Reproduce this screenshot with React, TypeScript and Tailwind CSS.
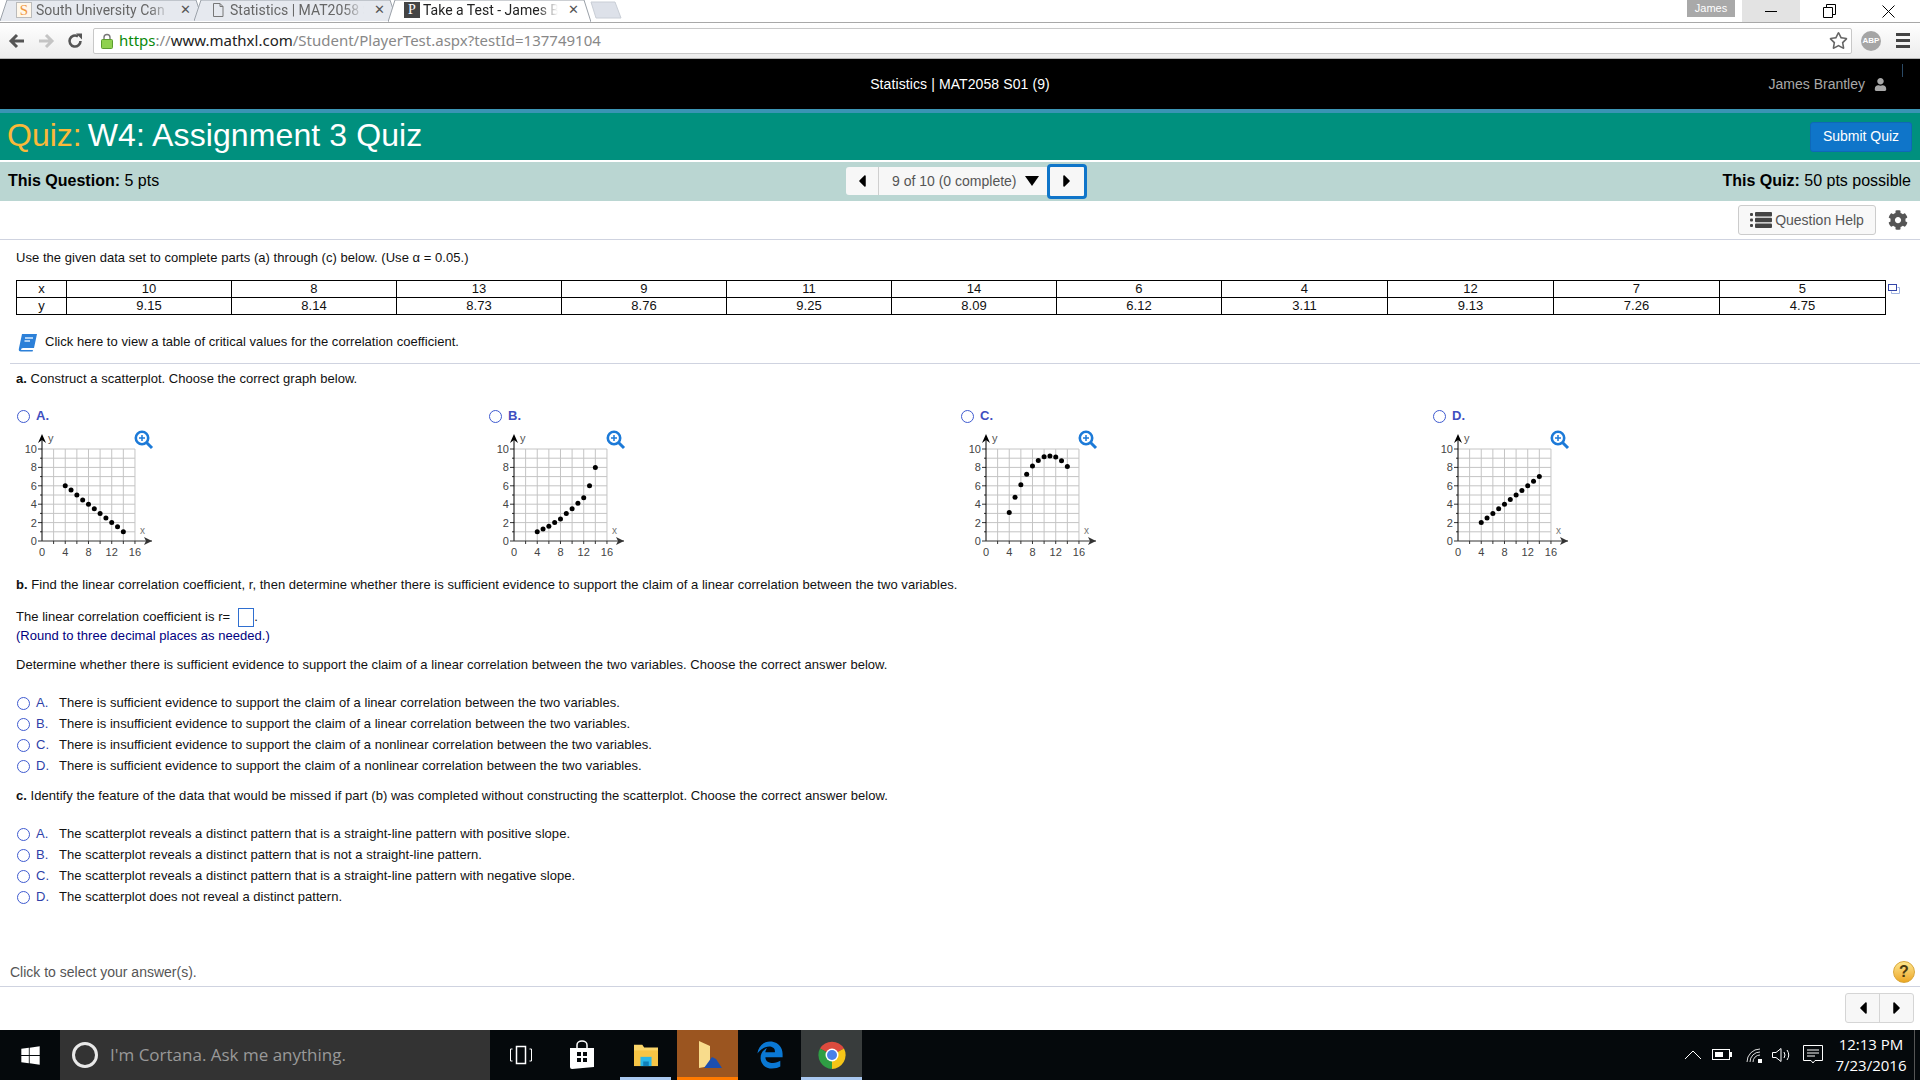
import { FaCaretLeft, FaCaretRight, FaCog, FaRegStar, FaUser, FaWindows } from "react-icons/fa";
import { FaEdgeLegacy } from "react-icons/fa6";

const xs = ["x", "10", "8", "13", "9", "11", "14", "6", "4", "12", "7", "5"];
const ys = ["y", "9.15", "8.14", "8.73", "8.76", "9.25", "8.09", "6.12", "3.11", "9.13", "7.26", "4.75"];
const colWidths = [
  "w-[50px]", "w-[165px]", "w-[165px]", "w-[165px]", "w-[165px]", "w-[165px]",
  "w-[165px]", "w-[165px]", "w-[166px]", "w-[166px]", "w-[166px]", "w-[166px]",
];

const graphs = [
  { label: "A.", pts: [6, 5.55, 5, 4.45, 4, 3.5, 3, 2.5, 2, 1.55, 1] },
  { label: "B.", pts: [1, 1.3, 1.6, 2, 2.4, 3, 3.5, 4.1, 4.7, 6, 8] },
  { label: "C.", pts: [3.11, 4.75, 6.12, 7.26, 8.14, 8.76, 9.15, 9.25, 9.13, 8.73, 8.09] },
  { label: "D.", pts: [2, 2.5, 3, 3.5, 4, 4.5, 5, 5.5, 6, 6.5, 7] },
];

const partB = [
  ["A.", "There is sufficient evidence to support the claim of a linear correlation between the two variables."],
  ["B.", "There is insufficient evidence to support the claim of a linear correlation between the two variables."],
  ["C.", "There is insufficient evidence to support the claim of a nonlinear correlation between the two variables."],
  ["D.", "There is sufficient evidence to support the claim of a nonlinear correlation between the two variables."],
];

const partC = [
  ["A.", "The scatterplot reveals a distinct pattern that is a straight-line pattern with positive slope."],
  ["B.", "The scatterplot reveals a distinct pattern that is not a straight-line pattern."],
  ["C.", "The scatterplot reveals a distinct pattern that is a straight-line pattern with negative slope."],
  ["D.", "The scatterplot does not reveal a distinct pattern."],
];

function Radio() {
  return <span className="block h-[13px] w-[13px] shrink-0 rounded-full border border-[#3f5bd0] bg-white" />;
}

function Option({ letter, text }: { letter: string; text: string }) {
  return (
    <div className="flex h-4 items-center pl-[1px]">
      <Radio />
      <span className="ml-[6px] w-[23px] text-[#2f3fa8]">{letter}</span>
      <span>{text}</span>
    </div>
  );
}

function Scatter({ pts }: { pts: number[] }) {
  const px = (u: number) => 25 + u * 5.81;
  const py = (v: number) => 113 - v * 9.2;
  const vert = [1, 2, 3, 4, 5, 6, 7, 8];
  const horiz = [1, 2, 3, 4, 5, 6, 7, 8, 9, 10];
  return (
    <svg width="150" height="130" className="block">
      {vert.map((i) => (
        <line key={i} x1={px(i * 2)} x2={px(i * 2)} y1={py(10)} y2={py(0)} stroke="#c4c4c4" />
      ))}
      {horiz.map((i) => (
        <line key={i} x1={px(0)} x2={px(16)} y1={py(i)} y2={py(i)} stroke="#c4c4c4" />
      ))}
      {horiz.map((i) => (
        <line key={i} x1={px(0) - (i % 2 ? 2 : 4)} x2={px(0)} y1={py(i)} y2={py(i)} stroke="#333" />
      ))}
      {vert.map((i) => (
        <line key={i} x1={px(i * 2)} x2={px(i * 2)} y1={py(0)} y2={py(0) + 3} stroke="#333" />
      ))}
      <line x1={px(0)} x2={px(0)} y1={py(0)} y2="8" stroke="#000" />
      <line x1={px(0) - 4} x2="135" y1={py(0)} y2={py(0)} stroke="#333" />
      <path d="M25 6 L29 15 L25 12 L21 15 Z" fill="#000" />
      <path d="M135 113 L127 109 L129 113 L127 117 Z" fill="#333" />
      {[0, 2, 4, 6, 8, 10].map((v) => (
        <text key={v} x="20" y={py(v) + 4} textAnchor="end" fontSize="11" fill="#444" fontFamily="Liberation Sans, sans-serif">
          {v}
        </text>
      ))}
      {[0, 4, 8, 12, 16].map((v) => (
        <text key={v} x={px(v)} y="128" textAnchor="middle" fontSize="11" fill="#444" fontFamily="Liberation Sans, sans-serif">
          {v}
        </text>
      ))}
      <text x="31" y="14" fontSize="11" fill="#555" fontFamily="Liberation Sans, sans-serif">y</text>
      <text x="123" y="106" fontSize="10" fill="#777" fontFamily="Liberation Sans, sans-serif">x</text>
      {pts.map((v, i) => (
        <circle key={i} cx={px(i + 4)} cy={py(v)} r="2.5" fill="#000" />
      ))}
      <circle cx="125" cy="10" r="6.2" fill="#fff" stroke="#1c7ad8" strokeWidth="2.6" />
      <line x1="129.5" y1="14.5" x2="135" y2="20" stroke="#1c7ad8" strokeWidth="3" />
      <path d="M122 10 H128 M125 7 V13" stroke="#1c7ad8" strokeWidth="1.5" />
    </svg>
  );
}

function Tab({ active, title, icon }: { active?: boolean; title: string; icon: React.ReactNode }) {
  return (
    <div className={active ? "relative z-10 -ml-[9px] h-[23px] w-[203px]" : "relative -ml-[9px] h-[22px] w-[203px] first:ml-0"}>
      <svg className="absolute inset-0 h-full w-full" viewBox="0 0 203 23" preserveAspectRatio="none">
        <path d="M0 22 L7 0 H196 L203 22" fill={active ? "#ffffff" : "#e6e9ef"} stroke="#9aa0a8" />
      </svg>
      <div className="relative flex h-[20px] items-center pl-[16px] pr-[12px] text-[14px] font-['Roboto',sans-serif]">
        {icon}
        <span
          className={
            active
              ? "ml-[3px] w-[135px] whitespace-nowrap text-[#222] [mask-image:linear-gradient(to_right,black_85%,transparent)]"
              : "ml-[4px] w-[134px] whitespace-nowrap text-[#666] [mask-image:linear-gradient(to_right,black_85%,transparent)]"
          }
        >
          {title}
        </span>
        <span className="ml-auto text-[13px] text-[#555]">✕</span>
      </div>
    </div>
  );
}

export default function App() {
  return (
    <div className="flex h-[1080px] w-[1920px] flex-col overflow-hidden bg-white font-['Liberation_Sans',Arial,sans-serif] text-black">
      {/* browser tabs */}
      <div className="flex h-[22px] items-start">
        <Tab
          title="South University Can"
          icon={<span className="flex h-[16px] w-[16px] items-center justify-center border border-[#bbb] bg-[#fff7ea] font-['Liberation_Serif',serif] text-[15px] leading-none text-[#f0963c]">S</span>}
        />
        <Tab
          title="Statistics | MAT2058 S"
          icon={
            <svg width="16" height="16" viewBox="0 0 16 16" fill="none" stroke="#777">
              <path d="M3.5 1.5 H10 L13 4.5 V14.5 H3.5 Z M10 1.5 V4.5 H13" />
            </svg>
          }
        />
        <Tab
          active
          title="Take a Test - James B"
          icon={<span className="flex h-[16px] w-[16px] items-center justify-center bg-[#444] font-['Liberation_Serif',serif] text-[14px] leading-none text-white">P</span>}
        />
        <svg width="38" height="20" className="-ml-[3px]">
          <path d="M3 2 H27 L33 18 H8 Z" fill="#dde1e9" stroke="#c9ced6" />
        </svg>
        <div className="ml-auto flex h-[22px] items-start pr-[2px]">
          <div className="mr-[7px] flex h-[17px] w-[48px] items-center justify-center bg-[#a9a9a9] text-[11px] text-white">James</div>
          <div className="flex h-[22px] w-[58px] items-center justify-center bg-[#e3e3e3]">
            <div className="h-px w-[12px] bg-black" />
          </div>
          <div className="flex h-[22px] w-[58px] items-center justify-center">
            <svg width="13" height="14" fill="none" stroke="#000">
              <path d="M.5 3.5 H9.5 V13.5 H.5 Z M3.5 3.5 V.5 H12.5 V10.5 H9.5" />
            </svg>
          </div>
          <div className="flex h-[22px] w-[60px] items-center justify-center">
            <svg width="13" height="13" stroke="#000">
              <path d="M.5 .5 L12.5 12.5 M12.5 .5 L.5 12.5" />
            </svg>
          </div>
        </div>
      </div>

      {/* browser toolbar */}
      <div className="flex h-[37px] items-center border-t border-b border-t-[#a8a8a8] border-b-[#b5b5b5] bg-linear-to-b from-white to-[#ececec]">
        <svg width="18" height="16" viewBox="0 0 18 16" className="ml-[8px]" fill="none" stroke="#555" strokeWidth="3">
          <path d="M16 8 H3 M9 2 L3 8 L9 14" />
        </svg>
        <svg width="18" height="16" viewBox="0 0 18 16" className="ml-[11px]" fill="none" stroke="#c4c4c4" strokeWidth="3">
          <path d="M2 8 H15 M9 2 L15 8 L9 14" />
        </svg>
        <svg width="16" height="16" viewBox="0 0 16 16" className="ml-[12px]" fill="none" stroke="#555" strokeWidth="2.6">
          <path d="M13.5 8 A5.5 5.5 0 1 1 11 3.4" />
          <path d="M9 .5 H15 V6.5 Z" fill="#555" stroke="none" />
        </svg>
        <div className="ml-[10px] flex h-[26px] w-[1759px] items-center rounded-[2px] border border-[#c8c8c8] bg-white pl-[7px] font-['Noto_Sans',sans-serif] text-[15px]">
          <svg width="12" height="16" viewBox="0 0 12 16">
            <path d="M3 7 V4.5 A3 3 0 0 1 9 4.5 V7" fill="none" stroke="#777" strokeWidth="1.4" />
            <rect x="0.5" y="6.5" width="11" height="9" rx="1" fill="#8fd14f" stroke="#5c9c2f" />
          </svg>
          <span className="ml-[6px] whitespace-nowrap">
            <span className="text-[#0a8a0a]">https</span>
            <span className="text-[#888]">://</span>
            <span className="text-[#222]">www.mathxl.com</span>
            <span className="text-[#888]">/Student/PlayerTest.aspx?testId=137749104</span>
          </span>
          <FaRegStar className="ml-auto mr-[3px] text-[19px] text-[#666]" />
        </div>
        <div className="ml-[9px] flex h-[20px] w-[20px] items-center justify-center rounded-full bg-[#a5a5a5] text-[8px] font-bold text-white">ABP</div>
        <div className="ml-[15px] flex w-[14px] flex-col gap-[3px]">
          <div className="h-[3px] bg-[#444]" />
          <div className="h-[3px] bg-[#444]" />
          <div className="h-[3px] bg-[#444]" />
        </div>
      </div>

      {/* course bar */}
      <div className="relative flex h-[50px] items-center justify-center bg-black text-[14px] font-medium tracking-[0.1px] text-white">
        Statistics | MAT2058 S01 (9)
        <div className="absolute right-[33px] top-[15px] flex items-center gap-[9px] tracking-normal text-[#a8a8a8]">
          James Brantley
          <FaUser className="text-[13px]" />
        </div>
        <div className="absolute right-[17px] top-[5px] h-[13px] w-px bg-[#2b4a66]" />
      </div>
      <div className="h-[4px] bg-[#3a94b4]" />

      <div className="flex h-[47px] items-center justify-between bg-[#00907e] pl-[7px] pr-[8px]">
        <div className="-mt-[3px] flex gap-[6px] text-[32px] leading-none text-white">
          <span className="text-[#fbb939]">Quiz:</span>
          <span className="tracking-[0.1px]">W4: Assignment 3 Quiz</span>
        </div>
        <button className="flex h-[30px] w-[102px] items-center justify-center rounded-[3px] border border-[#0f68b8] bg-[#0f75c9] text-[14px] text-white">
          Submit Quiz
        </button>
      </div>
      <div className="h-[2px] bg-white" />

      <div className="relative flex h-[39px] items-center justify-between bg-[#bad6d2] pb-[2px] pl-[8px] pr-[9px] text-[16px]">
        <div>
          <b>This Question:</b> 5 pts
        </div>
        <div className="absolute left-[846px] top-[2px] flex h-[34px] items-center">
          <div className="flex h-[28px] items-center rounded-l-[3px] bg-[#f7f7f7] text-[14px] text-[#555]">
            <div className="flex h-[28px] w-[33px] items-center justify-center border-r border-[#cfcfcf]">
              <FaCaretLeft className="text-[20px] text-black" />
            </div>
            <span className="ml-[13px] whitespace-nowrap">9 of 10 (0 complete)</span>
            <svg width="14" height="10" className="ml-[8px] mr-[8px]">
              <path d="M0 0 H14 L7 10 Z" fill="#000" />
            </svg>
          </div>
          <div className="flex h-[35px] w-[40px] items-center justify-center rounded-[4px] border-[3px] border-[#0f75c9] bg-[#f7f7f7]">
            <FaCaretRight className="text-[20px] text-black" />
          </div>
        </div>
        <div>
          <b>This Quiz:</b> 50 pts possible
        </div>
      </div>

      <div className="flex h-[39px] items-center justify-end border-b border-[#cfd3e0] pr-[12px]">
        <button className="flex h-[30px] w-[138px] items-center justify-center gap-[3px] rounded-[3px] border border-[#ccc] bg-[#f8f8f8] text-[14px] text-[#555]">
          <svg width="22" height="16" viewBox="0 0 22 16" fill="#444">
            <rect x="0" y="1" width="3" height="3" rx="1" />
            <rect x="0" y="6.5" width="3" height="3" rx="1" />
            <rect x="0" y="12" width="3" height="3" rx="1" />
            <rect x="5" y="0" width="17" height="4.5" rx="1" />
            <rect x="5" y="5.8" width="17" height="4.5" rx="1" />
            <rect x="5" y="11.5" width="17" height="4.5" rx="1" />
          </svg>
          Question Help
        </button>
        <FaCog className="ml-[12px] text-[20px] text-[#555]" />
      </div>

      {/* question */}
      <div className="flex flex-1 flex-col text-[13px] leading-[16px] tracking-[0.04px] text-[#111]">
        <div className="ml-[16px] mt-[10px]">Use the given data set to complete parts (a) through (c) below. (Use α = 0.05.)</div>

        <div className="ml-[16px] mt-[14px] flex items-start">
          <table className="w-[1870px] table-fixed border-collapse border border-black text-center leading-[16px]">
            <tbody>
              {[xs, ys].map((row, r) => (
                <tr key={r} className="h-[17px]">
                  {row.map((v, i) => (
                    <td key={i} className={`${colWidths[i]} border border-black p-0`}>
                      {v}
                    </td>
                  ))}
                </tr>
              ))}
            </tbody>
          </table>
          <svg width="12" height="11" className="ml-[2px] mt-[4px]" fill="none">
            <rect x="0.5" y="0.5" width="8" height="6" stroke="#3345a8" />
            <path d="M9.5 3.5 H11.5 V9.5 H3.5 V7.5" stroke="#9fb2e0" />
          </svg>
        </div>

        <div className="ml-[18px] mt-[18px] flex h-[18px] items-center">
          <svg width="20" height="19" viewBox="0 0 20 19">
            <path d="M4 1 H19 L16 15 H5 Q3 15 3 17 H15 L14.6 18.5 H3 Q0 18.5 1 15 Z" fill="#2c80d8" />
            <path d="M7 5 H15 M6.5 8 H12" stroke="#d8ebff" strokeWidth="1.3" />
          </svg>
          <span className="ml-[7px]">Click here to view a table of critical values for the correlation coefficient.</span>
        </div>

        <div className="ml-[10px] mt-[12px] h-px bg-[#cfd3e0]" />

        <div className="ml-[16px] mt-[7px]">
          <b>a.</b> Construct a scatterplot. Choose the correct graph below.
        </div>

        <div className="ml-[17px] mt-[21px] flex">
          {graphs.map((g) => (
            <div key={g.label} className="w-[472px]">
              <div className="flex h-4 items-center">
                <Radio />
                <span className="ml-[6px] font-bold text-[#3f4fc0]">{g.label}</span>
              </div>
              <div className="mt-[4px]">
                <Scatter pts={g.pts} />
              </div>
            </div>
          ))}
        </div>

        <div className="ml-[16px] mt-[19px]">
          <b>b.</b> Find the linear correlation coefficient, r, then determine whether there is sufficient evidence to support the claim of a linear correlation between the two variables.
        </div>

        <div className="ml-[16px] mt-[16px] flex h-4 items-center">
          The linear correlation coefficient is r=
          <span className="ml-[8px] h-[19px] w-[16px] border border-[#2f6fd0] bg-white" />
          <span>.</span>
        </div>
        <div className="ml-[16px] mt-[3px] text-[#000080]">(Round to three decimal places as needed.)</div>

        <div className="ml-[16px] mt-[13px]">Determine whether there is sufficient evidence to support the claim of a linear correlation between the two variables. Choose the correct answer below.</div>

        <div className="ml-[16px] mt-[22px] flex flex-col gap-[5px]">
          {partB.map(([l, t]) => (
            <Option key={l} letter={l} text={t} />
          ))}
        </div>

        <div className="ml-[16px] mt-[14px]">
          <b>c.</b> Identify the feature of the data that would be missed if part (b) was completed without constructing the scatterplot. Choose the correct answer below.
        </div>

        <div className="ml-[16px] mt-[22px] flex flex-col gap-[5px]">
          {partC.map(([l, t]) => (
            <Option key={l} letter={l} text={t} />
          ))}
        </div>

        <div className="mt-auto flex h-[28px] items-center justify-between pl-[10px] pr-[5px] text-[14px] tracking-normal text-[#555]">
          Click to select your answer(s).
          <span className="flex h-[22px] w-[22px] items-center justify-center rounded-full border border-[#d9a63a] bg-linear-to-b from-[#fde68a] to-[#eca71c] text-[16px] font-bold text-[#4a3a10]">?</span>
        </div>
      </div>

      {/* footer nav */}
      <div className="flex h-[44px] items-start justify-end border-t border-[#cfd3e0] pr-[6px] pt-[6px]">
        <div className="flex h-[30px] w-[69px] rounded-[3px] border border-[#d5d5d5] bg-[#f7f7f7]">
          <div className="flex flex-1 items-center justify-center border-r border-[#d5d5d5]">
            <FaCaretLeft className="text-[20px] text-black" />
          </div>
          <div className="flex flex-1 items-center justify-center">
            <FaCaretRight className="text-[20px] text-black" />
          </div>
        </div>
      </div>

      {/* windows taskbar */}
      <div className="flex h-[50px] items-stretch bg-[#05090c] text-white">
        <div className="flex w-[60px] items-center justify-center">
          <FaWindows className="text-[21px]" />
        </div>
        <div className="flex w-[430px] items-center bg-[#333333] pl-[12px] font-['Open_Sans',sans-serif] text-[17px] text-[#999]">
          <span className="h-[26px] w-[26px] rounded-full border-[3px] border-[#e8e8e8]" />
          <span className="ml-[12px]">I'm Cortana. Ask me anything.</span>
        </div>
        <div className="flex w-[61px] items-center justify-center">
          <svg width="24" height="20" fill="none" stroke="#fff">
            <path d="M7.5 1.5 H16.5 V18.5 H7.5 Z" strokeWidth="1.5" />
            <path d="M3.5 4 H1.5 V16 H3.5 M20.5 4 H22.5 V16 H20.5" />
          </svg>
        </div>
        <div className="flex w-[61px] items-center justify-center">
          <svg width="26" height="30" viewBox="0 0 26 30">
            <path d="M8 8 V5 A5 4 0 0 1 18 5 V8" fill="none" stroke="#fff" strokeWidth="1.5" />
            <path d="M1 8 H25 V27 L3 29 Q1 29 1 27 Z" fill="#fff" />
            <path d="M8 12 H12 V16 H8 Z M14 12 H18 V16 H14 Z M8 18 H12 V22 H8 Z M14 18 H18 V22 H14 Z" fill="#05090c" />
          </svg>
        </div>
        <div className="relative flex w-[65px] items-center justify-center pl-[2px]">
          <svg width="28" height="24" viewBox="0 0 28 26">
            <path d="M1 2 H10 L12 5 H27 V25 H1 Z" fill="#fbd569" />
            <path d="M1 8 H27 V25 H1 Z" fill="#f6c445" />
            <path d="M8 15 H20 V25 H8 Z" fill="#29b6e8" />
            <path d="M11 20 H17 V25 H11 Z" fill="#0f7fb8" />
          </svg>
          <div className="absolute bottom-0 left-[8px] right-[6px] h-[3px] bg-[#a9c8f0]" />
        </div>
        <div className="relative flex w-[61px] items-center justify-center bg-[#9b5520]">
          <svg width="30" height="30" viewBox="0 0 30 30">
            <path d="M6 1 L17 6 V26 L6 28 Z" fill="#f8dc8c" />
            <path d="M11 28 L19 17 L23 19 L29 28 Z" fill="#1c4fb0" />
          </svg>
          <div className="absolute inset-x-0 bottom-0 h-[3px] bg-[#ff7a00]" />
        </div>
        <div className="flex w-[63px] items-center justify-center">
          <FaEdgeLegacy className="text-[28px] text-[#0a78d4]" />
        </div>
        <div className="relative flex w-[61px] items-center justify-center bg-[#383c3c]">
          <svg width="28" height="28" viewBox="0 0 28 28">
            <path d="M14 14 L2 7.5 A14 14 0 0 1 26 7.5 Z" fill="#dd4b3e" />
            <path d="M14 14 L26 7.5 A14 14 0 0 1 14 28 Z" fill="#f5c518" />
            <path d="M14 14 L14 28 A14 14 0 0 1 2 7.5 Z" fill="#2f9e44" />
            <circle cx="14" cy="14" r="6.5" fill="#fff" />
            <circle cx="14" cy="14" r="5" fill="#4a80e8" />
          </svg>
          <div className="absolute inset-x-0 bottom-0 h-[3px] bg-[#a9c8f0]" />
        </div>
        <div className="ml-auto flex items-center">
          <svg width="18" height="10" fill="none" stroke="#fff" className="mr-[10px]">
            <path d="M1 9 L9 1 L17 9" />
          </svg>
          <svg width="20" height="12" className="mr-[14px]" fill="none" stroke="#fff">
            <rect x="0.5" y="0.5" width="17" height="10" />
            <rect x="3" y="3" width="8" height="5" fill="#fff" stroke="none" />
            <rect x="18" y="3" width="2" height="5" fill="#fff" stroke="none" />
          </svg>
          <svg width="17" height="15" className="mr-[9px]" fill="none" stroke="#ddd">
            <path d="M1 14 A13 13 0 0 1 14 1 M4 14 A10 10 0 0 1 14 4 M7 14 A7 7 0 0 1 14 7" />
            <rect x="12" y="11" width="4" height="4" fill="#fff" stroke="none" />
          </svg>
          <svg width="21" height="16" className="mr-[10px]" fill="none" stroke="#fff">
            <path d="M.5 5.5 H4 L9 1.5 V14.5 L4 10.5 H.5 Z M12 5 Q14 8 12 11 M15 3 Q18.5 8 15 13" />
          </svg>
          <svg width="20" height="20" className="mr-[12px]" fill="none" stroke="#fff">
            <path d="M.5 .5 H19.5 V15.5 H12 L10 18 L8 15.5 H.5 Z M4 5 H16 M4 8 H16 M4 11 H12" />
          </svg>
          <div className="mr-[7px] flex w-[72px] flex-col items-center font-['Open_Sans',sans-serif] text-[15px] leading-[21px]">
            <span>12:13 PM</span>
            <span>7/23/2016</span>
          </div>
          <div className="h-full w-px bg-[#555]" />
          <div className="w-[5px]" />
        </div>
      </div>
    </div>
  );
}
